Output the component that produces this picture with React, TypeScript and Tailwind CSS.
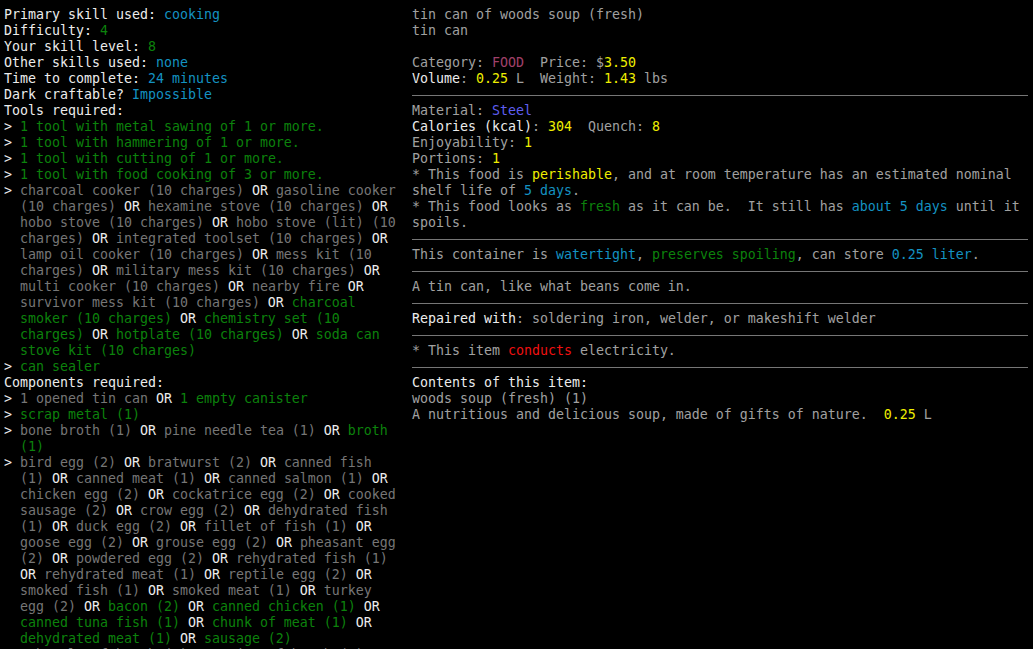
import * as React from "react";

type Tone = "w" | "g" | "d" | "l" | "c" | "y" | "m" | "b" | "r";
type Seg = [Tone, string];
type Row = Seg[] | "hr";

const toneClass: Record<Tone, string> = {
    w: "text-[#ececec]",
    g: "text-[#0c820c]",
    d: "text-[#767676]",
    l: "text-[#a0a0a0]",
    c: "text-[#1492c2]",
    y: "text-[#eeee00]",
    m: "text-[#a0406a]",
    b: "text-[#5e5ef0]",
    r: "text-[#f01010]",
};

const OR: Seg = ["w", " OR "];

const recipeRows: Row[] = [
    [["w", "Primary skill used: "], ["c", "cooking"]],
    [["w", "Difficulty: "], ["g", "4"]],
    [["w", "Your skill level: "], ["g", "8"]],
    [["w", "Other skills used: "], ["c", "none"]],
    [["w", "Time to complete: "], ["c", "24 minutes"]],
    [["w", "Dark craftable? "], ["c", "Impossible"]],
    [["w", "Tools required:"]],
    [["w", "> "], ["g", "1 tool with metal sawing of 1 or more."]],
    [["w", "> "], ["g", "1 tool with hammering of 1 or more."]],
    [["w", "> "], ["g", "1 tool with cutting of 1 or more."]],
    [["w", "> "], ["g", "1 tool with food cooking of 3 or more."]],
    [["w", "> "], ["d", "charcoal cooker (10 charges)"], OR, ["d", "gasoline cooker"]],
    [["d", "  (10 charges)"], OR, ["d", "hexamine stove (10 charges)"], ["w", " OR"]],
    [["d", "  hobo stove (10 charges)"], OR, ["d", "hobo stove (lit) (10"]],
    [["d", "  charges)"], OR, ["d", "integrated toolset (10 charges)"], ["w", " OR"]],
    [["d", "  lamp oil cooker (10 charges)"], OR, ["d", "mess kit (10"]],
    [["d", "  charges)"], OR, ["d", "military mess kit (10 charges)"], ["w", " OR"]],
    [["d", "  multi cooker (10 charges)"], OR, ["d", "nearby fire"], ["w", " OR"]],
    [["d", "  survivor mess kit (10 charges)"], OR, ["g", "charcoal"]],
    [["g", "  smoker (10 charges)"], OR, ["g", "chemistry set (10"]],
    [["g", "  charges)"], OR, ["g", "hotplate (10 charges)"], OR, ["g", "soda can"]],
    [["g", "  stove kit (10 charges)"]],
    [["w", "> "], ["g", "can sealer"]],
    [["w", "Components required:"]],
    [["w", "> "], ["d", "1 opened tin can"], OR, ["g", "1 empty canister"]],
    [["w", "> "], ["g", "scrap metal (1)"]],
    [["w", "> "], ["d", "bone broth (1)"], OR, ["d", "pine needle tea (1)"], OR, ["g", "broth"]],
    [["g", "  (1)"]],
    [["w", "> "], ["d", "bird egg (2)"], OR, ["d", "bratwurst (2)"], OR, ["d", "canned fish"]],
    [["d", "  (1)"], OR, ["d", "canned meat (1)"], OR, ["d", "canned salmon (1)"], ["w", " OR"]],
    [["d", "  chicken egg (2)"], OR, ["d", "cockatrice egg (2)"], OR, ["d", "cooked"]],
    [["d", "  sausage (2)"], OR, ["d", "crow egg (2)"], OR, ["d", "dehydrated fish"]],
    [["d", "  (1)"], OR, ["d", "duck egg (2)"], OR, ["d", "fillet of fish (1)"], ["w", " OR"]],
    [["d", "  goose egg (2)"], OR, ["d", "grouse egg (2)"], OR, ["d", "pheasant egg"]],
    [["d", "  (2)"], OR, ["d", "powdered egg (2)"], OR, ["d", "rehydrated fish (1)"]],
    [["w", "  OR "], ["d", "rehydrated meat (1)"], OR, ["d", "reptile egg (2)"], ["w", " OR"]],
    [["d", "  smoked fish (1)"], OR, ["d", "smoked meat (1)"], OR, ["d", "turkey"]],
    [["d", "  egg (2)"], OR, ["g", "bacon (2)"], OR, ["g", "canned chicken (1)"], ["w", " OR"]],
    [["g", "  canned tuna fish (1)"], OR, ["g", "chunk of meat (1)"], ["w", " OR"]],
    [["g", "  dehydrated meat (1)"], OR, ["g", "sausage (2)"]],
    [["d", "> 1 bottle of broth (1) OR 1 jar of broth (1)"]],
];

const itemRows: Row[] = [
    [["l", "tin can of woods soup (fresh)"]],
    [["l", "tin can"]],
    [],
    [["l", "Category: "], ["m", "FOOD"], ["l", "  Price: $"], ["y", "3.50"]],
    [["w", "Volume"], ["l", ": "], ["y", "0.25"], ["l", " L  Weight: "], ["y", "1.43"], ["l", " lbs"]],
    "hr",
    [["l", "Material: "], ["b", "Steel"]],
    [["w", "Calories (kcal)"], ["l", ": "], ["y", "304"], ["l", "  Quench: "], ["y", "8"]],
    [["l", "Enjoyability: "], ["y", "1"]],
    [["l", "Portions: "], ["y", "1"]],
    [["l", "* This food is "], ["y", "perishable"], ["l", ", and at room temperature has an estimated nominal"]],
    [["l", "shelf life of "], ["c", "5 days"], ["l", "."]],
    [["l", "* This food looks as "], ["g", "fresh"], ["l", " as it can be.  It still has "], ["c", "about 5 days"], ["l", " until it"]],
    [["l", "spoils."]],
    "hr",
    [["l", "This container is "], ["c", "watertight"], ["l", ", "], ["g", "preserves spoiling"], ["l", ", can store "], ["c", "0.25 liter"], ["l", "."]],
    "hr",
    [["l", "A tin can, like what beans come in."]],
    "hr",
    [["w", "Repaired with"], ["l", ": soldering iron, welder, or makeshift welder"]],
    "hr",
    [["l", "* This item "], ["r", "conducts"], ["l", " electricity."]],
    "hr",
    [["w", "Contents of this item:"]],
    [["l", "woods soup (fresh) (1)"]],
    [["l", "A nutritious and delicious soup, made of gifts of nature.  "], ["y", "0.25"], ["l", " L"]],
];

const Line: React.FC<{ row: Row }> = ({ row }) => {
    if (row === "hr") {
        return (
            <div className="h-4 flex items-center">
                <div className="h-px w-full bg-[#767676]" />
            </div>
        );
    }
    return (
        <div className="h-4 leading-4 whitespace-pre">
            {row.map(([tone, text], i) => (
                <span key={i} className={toneClass[tone]}>
                    {text}
                </span>
            ))}
        </div>
    );
};

export default function App() {
    return (
        <div className="h-[649px] w-[1033px] overflow-hidden bg-black pt-[7px] px-[4px] flex font-['DejaVu_Sans_Mono',monospace] text-[13.29px]">
            <div className="w-[404px] shrink-0">
                {recipeRows.map((row, i) => (
                    <Line key={i} row={row} />
                ))}
            </div>
            <div className="w-[616px] ml-[4px] shrink-0">
                {itemRows.map((row, i) => (
                    <Line key={i} row={row} />
                ))}
            </div>
        </div>
    );
}
